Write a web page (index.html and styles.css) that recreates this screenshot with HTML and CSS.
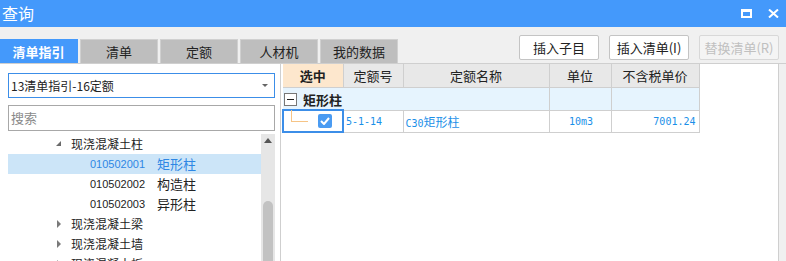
FILE: index.html
```html
<!DOCTYPE html>
<html>
<head>
    <title>查询</title>
    <link rel="stylesheet" href="styles.css">
</head>
<body>

<div class="window">
    <div class="titlebar">
        <span class="title">查询</span>
        <div class="win-btns">
            <span class="btn-max"></span>
            <svg class="btn-close" width="11" height="9" viewBox="0 0 11 9"><path d="M1 0.5 L10 8.5 M10 0.5 L1 8.5" stroke="#fff" stroke-width="2"/></svg>
        </div>
    </div>

    <div class="topbar">
        <div class="tabs">
            <div class="tab active">清单指引</div>
            <div class="tab">清单</div>
            <div class="tab">定额</div>
            <div class="tab">人材机</div>
            <div class="tab">我的数据</div>
        </div>
        <div class="actions">
            <button class="btn">插入子目</button>
            <button class="btn">插入清单(I)</button>
            <button class="btn" disabled>替换清单(R)</button>
        </div>
    </div>

    <div class="content">
        <div class="left">
            <div class="select-box">
                <span>13清单指引-16定额</span>
                <span class="caret"></span>
            </div>
            <div class="search-box">搜索</div>
            <div class="tree">
                <div class="tree-rows">
                    <div class="node lvl2"><span class="tri open"></span>现浇混凝土柱</div>
                    <div class="node leaf selected"><span class="code">010502001</span><span class="name">矩形柱</span></div>
                    <div class="node leaf"><span class="code">010502002</span><span class="name">构造柱</span></div>
                    <div class="node leaf"><span class="code">010502003</span><span class="name">异形柱</span></div>
                    <div class="node lvl2"><span class="tri closed"></span>现浇混凝土梁</div>
                    <div class="node lvl2"><span class="tri closed"></span>现浇混凝土墙</div>
                    <div class="node lvl2"><span class="tri closed"></span>现浇混凝土板</div>
                </div>
                <div class="scrollbar">
                    <span class="sb-up"></span>
                    <span class="sb-thumb"></span>
                </div>
            </div>
        </div>

        <div class="right">
            <table class="grid">
                <colgroup>
                    <col style="width:60px">
                    <col style="width:60px">
                    <col style="width:146px">
                    <col style="width:62px">
                    <col style="width:88px">
                </colgroup>
                <thead>
                    <tr>
                        <th class="pick">选中</th>
                        <th>定额号</th>
                        <th>定额名称</th>
                        <th>单位</th>
                        <th>不含税单价</th>
                    </tr>
                </thead>
                <tbody>
                    <tr class="group">
                        <td colspan="3"><span class="minus"></span><b>矩形柱</b></td>
                        <td></td>
                        <td></td>
                    </tr>
                    <tr class="item">
                        <td class="check-cell">
                            <span class="branch"></span>
                            <span class="check">
                                <svg width="10" height="8" viewBox="0 0 10 8"><path d="M1 4 L4 7 L9 1" fill="none" stroke="#fff" stroke-width="2"/></svg>
                            </span>
                        </td>
                        <td class="mono">5-1-14</td>
                        <td class="mono">C30<span class="cjk">矩形柱</span></td>
                        <td class="mono center">10m3</td>
                        <td class="mono num">7001.24</td>
                    </tr>
                </tbody>
            </table>
        </div>
        <div class="edge"></div>
    </div>
</div>

</body>
</html>
```

FILE: styles.css
```css
body { margin: 0; font-family: "Noto Sans CJK SC", "Noto Sans", sans-serif; font-size: 12px; color: #222; }
.window { width: 786px; height: 261px; overflow: hidden; background: #f0f0f0; display: flex; flex-direction: column; }

.titlebar { height: 27px; flex: none; background: #4499fb; color: #fff; display: flex; justify-content: space-between; align-items: center; }
.title { font-size: 16px; margin-left: 2px; line-height: 27px; }
.win-btns { display: flex; align-items: center; gap: 16px; margin-right: 7px; }
.btn-max { width: 7px; height: 4px; border: 2px solid #fff; border-top-width: 3px; }

.topbar { height: 36px; flex: none; display: flex; justify-content: space-between; border-bottom: 1px solid #cfcfcf; }
.tabs { display: flex; gap: 2px; align-self: flex-end; }
.tab { width: 76px; height: 23px; line-height: 23px; text-align: center; font-size: 13px; background: #bebebe; border: 1px solid #d0d0d0; border-bottom: none; color: #222; }
.tab.active { background: #4499fb; border-color: #4499fb; color: #fff; font-weight: bold; width: 77px; border-left: none; }
.actions { display: flex; gap: 10px; margin-top: 8px; margin-right: 7px; align-self: flex-start; }
.btn { width: 80px; height: 25px; font-family: inherit; font-size: 13px; background: #fff; border: 1px solid #c4c4c4; border-radius: 2px; color: #222; padding: 0; }
.btn:disabled { color: #c0c0c0; border-color: #d8d8d8; background: #f4f4f4; }

.content { flex: 1; display: flex; }
.left { width: 281px; flex: none; background: #fff; border-right: 1px solid #cfcfcf; padding: 9px 0 0 8px; box-sizing: border-box; }
.select-box { width: 267px; height: 25px; box-sizing: border-box; border: 1px solid #3c8ee8; display: flex; align-items: center; justify-content: space-between; padding: 0 6px 0 2px; font-size: 12px; }
.caret { width: 0; height: 0; border-left: 3px solid transparent; border-right: 3px solid transparent; border-top: 3px solid #666; }
.search-box { width: 267px; height: 26px; box-sizing: border-box; border: 1px solid #a8a8a8; margin-top: 7px; padding-left: 2px; line-height: 24px; color: #8a8a8a; font-size: 13px; }

.tree { display: flex; margin-top: 3px; width: 267px; }
.tree-rows { flex: 1; }
.node { height: 20px; line-height: 20px; font-size: 12px; display: flex; align-items: center; white-space: nowrap; }
.lvl2 { padding-left: 48px; }
.tri { width: 15px; height: 10px; display: inline-block; position: relative; }
.tri.open::before { content: ""; position: absolute; left: 0; top: 2px; border-left: 5px solid transparent; border-bottom: 5px solid #6a6a6a; }
.tri.closed::before { content: ""; position: absolute; left: 1px; top: 1px; border-top: 4px solid transparent; border-bottom: 4px solid transparent; border-left: 4px solid #7a7a7a; }
.leaf { padding-left: 82px; }
.code { width: 67px; flex: none; font-family: "Liberation Sans", Arial, sans-serif; font-size: 11px; }
.name { font-size: 13px; }
.selected { background: #cce5f8; color: #2e87e4; }

.scrollbar { width: 14px; flex: none; background: #e6e6e6; display: flex; flex-direction: column; align-items: center; }
.sb-up { width: 0; height: 0; margin-top: 4px; border-left: 4px solid transparent; border-right: 4px solid transparent; border-bottom: 5px solid #555; }
.sb-thumb { width: 10px; height: 60px; margin-top: 58px; background: #c2c2c2; border-radius: 5px 5px 0 0; }

.right { flex: 1; background: #fff; padding-left: 1px; }
.grid { border-collapse: collapse; table-layout: fixed; width: 416px; font-size: 13px; }
.grid th, .grid td { border: 1px solid #cfcfcf; padding: 0; }
.grid th { height: 23px; background: #e8e8e8; font-weight: normal; color: #222; border-top: none; }
.grid th.pick { background: #fde7cd; font-weight: bold; }
.grid th:first-child, .grid td:first-child { border-left: none; }
.group td { height: 21px; background: #e6f4fe; }
.group b { font-size: 13px; vertical-align: middle; }
.minus { display: inline-block; width: 11px; height: 11px; border: 1px solid #777; margin: 0 6px 0 1px; vertical-align: middle; position: relative; background: #fff; }
.minus::after { content: ""; position: absolute; left: 2px; right: 2px; top: 5px; height: 1px; background: #222; }
.item td { height: 20px; color: #1a8fe8; }
.mono { font-family: "DejaVu Sans Mono", "Noto Sans CJK SC", monospace; font-size: 10px; padding-left: 2px !important; }
.cjk { font-family: "Noto Sans CJK SC", sans-serif; font-size: 12px; }
.center { text-align: center; }
.num { text-align: right; padding-right: 3px !important; }
.check-cell { border: 2px solid #3c8ee8 !important; position: relative; }
.branch { position: absolute; left: 7px; top: -1px; width: 16px; height: 11px; border-left: 1px solid #f6c486; border-bottom: 1px solid #f6c486; }
.check { position: absolute; left: 34px; top: 3px; width: 14px; height: 14px; border-radius: 2px; background: #4a9bf2; display: flex; align-items: center; justify-content: center; }

.edge { width: 7px; flex: none; border-left: 1px solid #cfcfcf; background: #f0f0f0; }
```
